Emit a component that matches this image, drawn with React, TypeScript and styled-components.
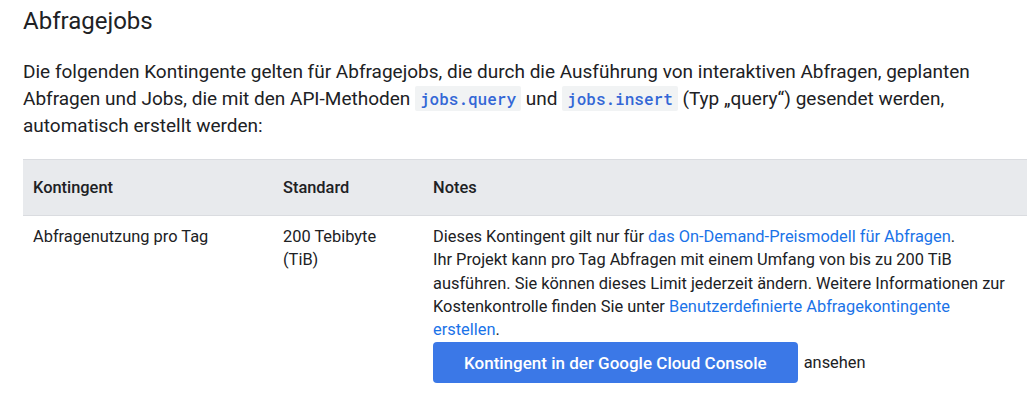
import React from "react";
import styled, { createGlobalStyle } from "styled-components";

type QuotaRow = {
  name: string;
  standard: string;
};

const row: QuotaRow = {
  name: "Abfragenutzung pro Tag",
  standard: "200 Tebibyte (TiB)",
};

const App = () => {
  return (
    <Page>
      <GlobalStyle />
      <Heading>Abfragejobs</Heading>
      <Intro>
        Die folgenden Kontingente gelten für Abfragejobs, die durch die
        Ausführung von interaktiven Abfragen, geplanten Abfragen und Jobs, die
        mit den API-Methoden <Code>jobs.query</Code> und{" "}
        <Code>jobs.insert</Code> (Typ „query“) gesendet werden, automatisch
        erstellt werden:
      </Intro>
      <Table>
        <colgroup>
          <col style={{ width: 250 }} />
          <col style={{ width: 150 }} />
          <col />
        </colgroup>
        <thead>
          <tr>
            <HeadCell>Kontingent</HeadCell>
            <HeadCell>Standard</HeadCell>
            <HeadCell>Notes</HeadCell>
          </tr>
        </thead>
        <tbody>
          <tr>
            <Cell>{row.name}</Cell>
            <Cell>{row.standard}</Cell>
            <Cell>
              Dieses Kontingent gilt nur für{" "}
              <Link href="#">das On-Demand-Preismodell für Abfragen</Link>.
              <br />
              Ihr Projekt kann pro Tag Abfragen mit einem Umfang von bis zu 200
              TiB ausführen. Sie können dieses Limit jederzeit ändern. Weitere
              Informationen zur Kostenkontrolle finden Sie unter{" "}
              <Link href="#">Benutzerdefinierte Abfragekontingente erstellen</Link>.
              <ButtonLine>
                <ConsoleButton>Kontingent in der Google Cloud Console</ConsoleButton>
                ansehen
              </ButtonLine>
            </Cell>
          </tr>
        </tbody>
      </Table>
    </Page>
  );
};

const GlobalStyle = createGlobalStyle`
  body {
    margin: 0;
    background: #ffffff;
    color: #202124;
    font-family: Roboto, "Noto Sans", sans-serif;
    -webkit-font-smoothing: antialiased;
  }
`;

const Page = styled.div`
  padding: 0 3px 0 23px;
  overflow: hidden;
`;

const Heading = styled.h2`
  margin: 7px 0 0;
  font-size: 24px;
  font-weight: 400;
  line-height: 28px;
  color: #202124;
`;

const Intro = styled.p`
  margin: 23px 0 0;
  font-size: 19px;
  line-height: 27px;
  color: #202124;
`;

const Code = styled.code`
  font-family: "Roboto Mono", "DejaVu Sans Mono", monospace;
  font-size: 16px;
  font-weight: 500;
  color: #3367d6;
  background: #f1f3f4;
  padding: 2px 5px;
  border-radius: 2px;
`;

const Table = styled.table`
  margin-top: 20px;
  width: 100%;
  border-collapse: collapse;
  table-layout: fixed;
  font-size: 16.4px;
  line-height: 23.3px;
`;

const HeadCell = styled.th`
  background: #e8eaed;
  border-top: 1px solid #dadce0;
  border-bottom: 1px solid #dadce0;
  text-align: left;
  font-weight: 500;
  padding: 16px 10px 15px;
  height: 24px;
`;

const Cell = styled.td`
  vertical-align: top;
  padding: 9px 10px 8px;
`;

const Link = styled.a`
  color: #1a73e8;
  text-decoration: none;
`;

const ButtonLine = styled.div`
  display: flex;
  align-items: center;
  gap: 6px;
  margin-top: 1px;
`;

const ConsoleButton = styled.button`
  background: #3b78e7;
  color: #ffffff;
  border: none;
  border-radius: 4px;
  height: 41px;
  padding: 0 31px;
  font-family: Roboto, sans-serif;
  font-size: 17px;
  font-weight: 500;
  cursor: pointer;
`;

export default App;
